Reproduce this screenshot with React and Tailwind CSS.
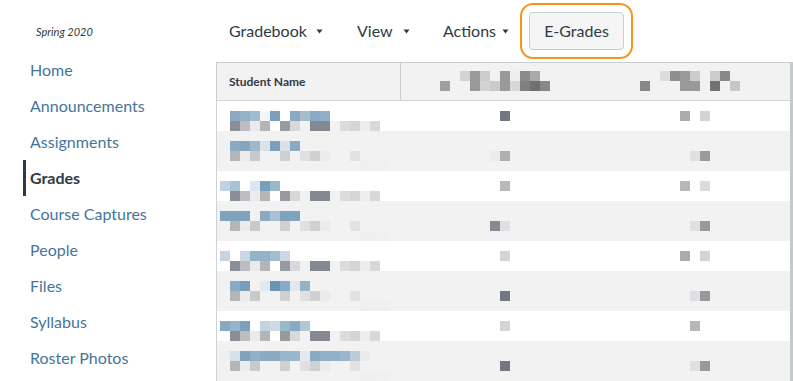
import React from "react";

const NAV = [
  "Home",
  "Announcements",
  "Assignments",
  "Grades",
  "Course Captures",
  "People",
  "Files",
  "Syllabus",
  "Roster Photos",
];

// blurred cells, 10px blocks: [startX, colours]
const GRAY_A = [230, ["#8a8e95", "#bbbdc0", "#ebebed", "#b4b5b7", null, "#979a9e", "#d8d8da", "#f2f2f2", "#848890", "#848890", "#f2f2f2", "#dcdcde", "#d5d5d7", "#ededed", "#d8d8da"]];
const GRAY_B = [230, ["#b5b6b8", "#ececec", "#c8c9cb", null, null, "#d0d0d2", null, "#e0e0e2", "#d0d0d2", "#ececec", null, null, "#e2e2e3"]];
const FAINT = [360, ["#efefef", "#f0f0f0", "#f0f0f0"]];

const ROWS = [
  { striped: false, blue: [230, ["#8daac2", "#95b1c8", "#a3bbce", "#f3f6f9", "#7ba0bc", null, "#8aaac4", "#a8bccd", "#8aabc6", "#90b0c8"]], c1: [500, ["#737880"]], c2: [680, ["#a9abae", null, "#d3d3d5"]] },
  { striped: true, blue: [220, ["#eef1f5", "#8aaac4", "#85a6c1", "#a0b8cc", "#dbe3ea", "#7aa0bb", "#d8e1ea", "#8aaac4"]], c1: [490, ["#ececec", "#aeb0b3"]], c2: [690, ["#e0e0e2", "#979a9e"]] },
  { striped: false, blue: [220, ["#c0d2df", "#a9c3d4", null, "#dde6ee", "#789fbb", "#9ab6cb"]], c1: [500, ["#b7b9bc"]], c2: [680, ["#b5b7ba", null, "#dcdcde"]] },
  { striped: true, blue: [220, ["#7fa3bd", "#7fa3bd", "#7fa3bd", null, "#8aaac4", "#a8c0d1", "#7fa3bd", "#7fa3bd"]], c1: [490, ["#868a92", "#e0e0e2"]], c2: [690, ["#e0e0e2", "#979a9e"]] },
  { striped: false, blue: [220, ["#c6d5e1", null, "#c8d7e3", "#94b3c9", "#94b3c9", "#a4bccf", "#ccd9e4"]], c1: [500, ["#d3d4d6"]], c2: [680, ["#a9acb0", null, "#d3d3d5"]] },
  { striped: true, blue: [230, ["#8aaac4", "#779ebb", null, "#e2e8ee", "#6a95b4", "#8aaac4", "#e2e8ee", "#94b3c9"]], c1: [500, ["#737880"]], c2: [690, ["#e0e0e2", "#979a9e"]] },
  { striped: false, blue: [220, ["#88a9c2", "#99b4c8", "#7ca1bc", null, "#c3d3e0", "#cfdbe5", "#9bb7cb", "#88aac3", "#b2c7d6"]], c1: [500, ["#d3d4d6"]], c2: [690, ["#b5b7ba"]] },
  { striped: true, blue: [220, ["#eceff2", "#d8e1e9", "#7fa3bd", "#92b0c7", "#8aaac4", "#8aaac4", "#9bb5ca", "#9bb7cb", "#e5e9ee", "#88aac3", "#92b0c7", "#92b0c7", "#9bb5ca", "#bacbd9", "#e9ecef"]], c1: [500, ["#737880"]], c2: [690, ["#e0e0e2", "#979a9e"]] },
];

function Blocks({ line, origin }) {
  const [start, cells] = line;
  return (
    <div className="flex h-[10px]" style={{ marginLeft: start - origin }}>
      {cells.map((c, i) => (
        <div key={i} className="w-[10px] h-[10px] shrink-0" style={{ background: c || "transparent" }} />
      ))}
    </div>
  );
}

function Caret() {
  return (
    <svg width="7" height="5" viewBox="0 0 7 5" className="shrink-0">
      <path d="M0.5 0.5h6L3.5 4.5z" fill="#2d3b45" />
    </svg>
  );
}

function Sidebar() {
  return (
    <div className="w-[216px] shrink-0 pt-[24px]">
      <div className="pl-[36px] h-[16px] flex items-center text-[11px] italic text-[#2d3b45]">
        Spring 2020
      </div>
      <ul className="mt-[12px] pl-[23px]">
        {NAV.map((item) => (
          <li
            key={item}
            className={
              "h-[36px] flex items-center pl-[4px] border-l-[3px] text-[16px] " +
              (item === "Grades"
                ? "border-[#2d3b45] text-[#2d3b45] font-bold"
                : "border-transparent text-[#45759c]")
            }
          >
            {item}
          </li>
        ))}
      </ul>
    </div>
  );
}

function Toolbar() {
  return (
    <div className="h-[62px] flex items-center pl-[13px] text-[16px] text-[#2d3b45]">
      <div className="w-[128px] flex items-center gap-[9px]">
        Gradebook <Caret />
      </div>
      <div className="w-[86px] flex items-center gap-[10px]">
        View <Caret />
      </div>
      <div className="w-[86px] flex items-center gap-[6px]">
        Actions <Caret />
      </div>
      <button className="w-[95px] h-[38px] mt-[-1px] rounded-[4px] border border-[#c7cdd1] bg-[#f5f5f5] text-[#2d3b45] outline-[2.5px] outline-[#f7941d] outline-offset-[7px]">
        E-Grades
      </button>
    </div>
  );
}

function Grid() {
  return (
    <div className="flex border-t border-[#c7cdd1]">
      <div className="w-[574px]">
        {/* header */}
        <div className="flex h-[38px] bg-[#f2f2f2] border-b border-[#d4d8db]">
          <div className="w-[185px] border-l border-r border-[#c7cdd1] pl-[12px] flex items-center text-[12px] font-bold text-[#2d3b45]">
            Student Name
          </div>
          <div className="w-[199px] pt-[8px]">
            <Blocks line={[460, ["#d3d3d3", "#999999", "#cccccc", null, "#999999", "#eeeeee", "#8a8a8a", "#aaaaaa"]]} origin={401} />
            <Blocks line={[440, ["#a0a0a0", null, null, "#999999", "#d3d3d3", "#cacaca", "#999999", "#d8d8d8", "#808080", "#707070", "#888888"]]} origin={401} />
          </div>
          <div className="flex-1 pt-[8px]">
            <Blocks line={[660, ["#dddddd", "#8e8e8e", "#999999", "#cccccc", null, "#cccccc", "#888888"]]} origin={600} />
            <Blocks line={[640, ["#888888", null, null, null, "#999999", "#999999", null, "#727272", null, "#c7c7c7"]]} origin={600} />
          </div>
        </div>
        {/* rows */}
        {ROWS.map((r, i) => (
          <div
            key={i}
            className={"flex " + (r.striped ? "h-[40px] bg-[#f2f2f2]" : "h-[30px] bg-white")}
          >
            <div className="w-[184px] border-l border-[#d0d3d6] pt-[10px]">
              <Blocks line={r.blue} origin={217} />
              <Blocks line={r.striped ? GRAY_B : GRAY_A} origin={217} />
              {r.striped && <Blocks line={FAINT} origin={217} />}
            </div>
            <div className={"w-[200px] " + (r.striped ? "pt-[20px]" : "pt-[10px]")}>
              <Blocks line={r.c1} origin={400} />
            </div>
            <div className={"flex-1 " + (r.striped ? "pt-[20px]" : "pt-[10px]")}>
              <Blocks line={r.c2} origin={600} />
            </div>
          </div>
        ))}
      </div>
      <div className="w-[3px] bg-[#c5c8cc]" />
    </div>
  );
}

export default function App() {
  return (
    <div
      className="w-[793px] h-[381px] overflow-hidden flex bg-white"
      style={{ fontFamily: "Lato, 'Liberation Sans', sans-serif" }}
    >
      <Sidebar />
      <div className="flex-1 flex flex-col">
        <Toolbar />
        <Grid />
      </div>
    </div>
  );
}
